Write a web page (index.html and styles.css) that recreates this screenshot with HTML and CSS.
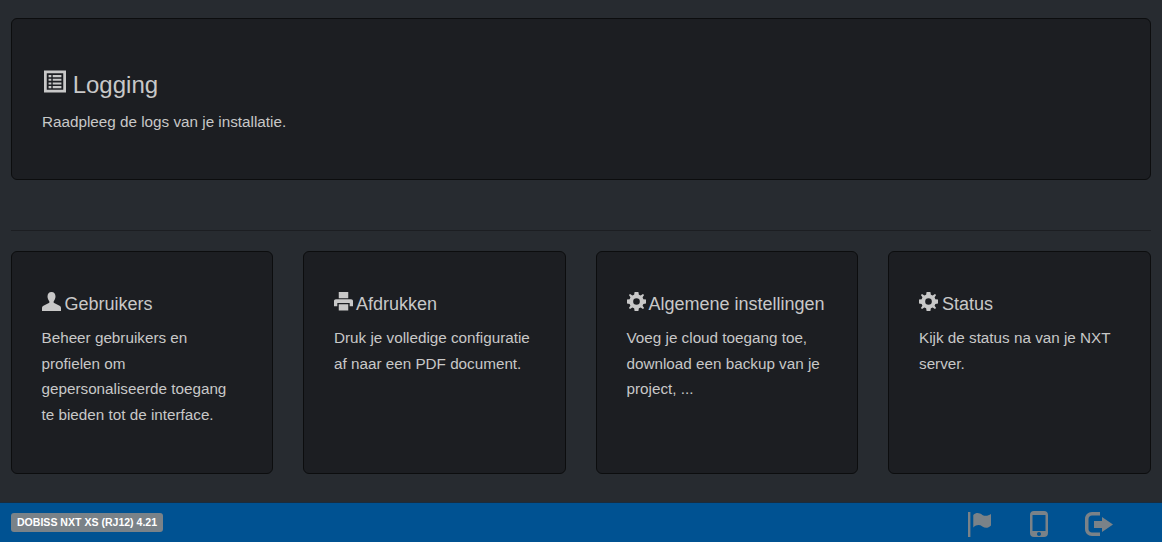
FILE: index.html
```html
<!DOCTYPE html>
<html lang="nl">
<head>
<meta charset="utf-8">
<title>Dobiss NXT</title>
<link rel="stylesheet" href="styles.css">
</head>
<body>
<main class="content">
  <section class="well well-wide">
    <h2 class="title-lg">
      <svg class="ico-lg" viewBox="0 0 24 24"><path fill-rule="evenodd" d="M0 0H24V24H0ZM3 3V21H21V3ZM5 5H8V7.300H5ZM9.500 5H19V7.300H9.500ZM5 9H8V11.300H5ZM9.500 9H19V11.300H9.500ZM5 13H8V15.300H5ZM9.500 13H19V15.300H9.500ZM5 17H8V19.300H5ZM9.500 17H19V19.300H9.500Z"/></svg>
      Logging</h2>
    <p class="text">Raadpleeg de logs van je installatie.</p>
  </section>
  <hr class="divider">
  <div class="cards">
    <section class="well card">
      <h3 class="title">
        <svg class="ico" viewBox="0 0 20 20"><path d="M10 0C7.300 0 5.800 2 5.800 4.800c0 2 .8 3.700 1.900 4.900v1.500L1.500 14.500C.4 15.100 0 16 0 17v3h20v-3c0-1-.4-1.900-1.500-2.500l-6.200-3.300V9.700c1.100-1.200 1.900-2.900 1.900-4.900C14.200 2 12.700 0 10 0Z"/></svg>
        Gebruikers</h3>
      <p class="text">Beheer gebruikers en profielen om gepersonaliseerde toegang te bieden tot de interface.</p>
    </section>
    <section class="well card">
      <h3 class="title">
        <svg class="ico" viewBox="0 0 20 20"><path fill-rule="evenodd" d="M5 0H15V6.500H5ZM2 7.500H18C19.200 7.500 20 8.300 20 9.500V15H16.500V11.500H3.500V15H0V9.500C0 8.300.8 7.500 2 7.500ZM5 13H15V19.500H5Z"/></svg>
        Afdrukken</h3>
      <p class="text">Druk je volledige configuratie af naar een PDF document.</p>
    </section>
    <section class="well card">
      <h3 class="title">
        <svg class="ico" viewBox="0 0 20 20"><use href="#gear"/></svg>
        Algemene instellingen</h3>
      <p class="text">Voeg je cloud toegang toe, download een backup van je project, ...</p>
    </section>
    <section class="well card">
      <h3 class="title">
        <svg class="ico" viewBox="0 0 20 20"><use href="#gear"/></svg>
        Status</h3>
      <p class="text">Kijk de status na van je NXT server.</p>
    </section>
  </div>
</main>
<footer class="bar">
  <span class="badge">DOBISS NXT XS (RJ12) 4.21</span>
  <nav class="bar-icons">
    <svg class="bar-ico flag" viewBox="0 0 24 26"><path d="M0 0H2.500V26H0ZM5.500 3C9 0 12 1 15 3C18 4.500 21 4 24 2V14C21 17 18 17 15 15C12 13 9 13 5.500 16Z"/></svg>
    <svg class="bar-ico phone" viewBox="0 0 18 26"><path fill-rule="evenodd" d="M4 0H14C16.500 0 18 1.500 18 4V22C18 24.500 16.500 26 14 26H4C1.500 26 0 24.500 0 22V4C0 1.500 1.500 0 4 0ZM2.500 4V20H15.500V4ZM9 21C7.800 21 7 21.800 7 23S7.800 25 9 25 11 24.200 11 23 10.200 21 9 21Z"/></svg>
    <svg class="bar-ico exit" viewBox="0 0 28 24"><path d="M7 0H15V3.500H7C5 3.500 3.500 5 3.500 7V17C3.500 19 5 20.500 7 20.500H15V24H7C3 24 0 21 0 17V7C0 3 3 0 7 0ZM17 5L28 12.500 17 20V16H9V9H17Z"/></svg>
  </nav>
</footer>
<svg class="defs" aria-hidden="true"><defs>
  <path id="gear" fill-rule="evenodd" d="M8 0H12L12.500 2.800 14.400 3.600 16.800 2 18 3.200 16.400 5.600 17.200 7.500 20 8V12L17.200 12.500 16.400 14.400 18 16.800 16.800 18 14.400 16.400 12.500 17.200 12 20H8L7.500 17.200 5.600 16.400 3.200 18 2 16.800 3.600 14.400 2.800 12.500 0 12V8L2.800 7.500 3.600 5.600 2 3.200 3.200 2 5.600 3.600 7.500 2.800ZM10 6.500A3.500 3.500 0 1 0 10 13.500 3.500 3.500 0 1 0 10 6.500Z"/>
</defs></svg>
</body>
</html>
```

FILE: styles.css
```css
* { box-sizing: border-box; }
html, body { height: 100%; }
body {
  margin: 0;
  background: #272b30;
  color: #c8c8c8;
  font-family: "Liberation Sans", Arial, sans-serif;
  font-size: 15.25px;
  line-height: 25.6px;
  display: flex;
  flex-direction: column;
  overflow: hidden;
}
.content { flex: 1; padding: 18px 11px 0; }
.well {
  background: #1c1e22;
  border: 1px solid #0c0d0e;
  border-radius: 6px;
}
.well-wide { height: 162px; padding: 48px 30px 0; }
.title-lg {
  margin: 0 0 6px;
  font-size: 24px;
  font-weight: 400;
  line-height: 36px;
  color: #c8c8c8;
}
.ico-lg { width: 22px; height: 23px; fill: #c8c8c8; vertical-align: 0; margin-left: 2px; }
.text { margin: 0; }
.divider { border: 0; border-top: 1px solid #1c1e22; margin: 50px 0 20px; }
.cards { display: grid; grid-template-columns: repeat(4, 1fr); gap: 30px; margin: 0 .5px 0 -.5px; }
.card { height: 223px; padding: 37px 30px 0; }
.title {
  margin: 0 0 6px;
  font-size: 18px;
  font-weight: 400;
  line-height: 30px;
  color: #c8c8c8;
}
.ico { width: 19px; height: 19px; fill: #c8c8c8; vertical-align: -1px; margin-right: -1px; }
.bar {
  flex: none;
  height: 40px;
  background: #005292;
  border-top: 1px solid #1a2c3e;
  display: flex;
  align-items: center;
  padding-left: 11px;
}
.badge {
  background: #7a8288;
  color: #fff;
  font-size: 10.55px;
  font-weight: 700;
  line-height: 19px;
  height: 19px;
  padding: 0 6px;
  border-radius: 3px;
}
.bar-icons { margin: 3px 0 0 auto; display: flex; align-items: center; padding-right: 49px; }
.bar-ico { fill: #7a8288; display: block; }
.flag { width: 23px; height: 25px; margin-right: 39px; }
.phone { width: 18px; height: 26px; margin-right: 37px; }
.exit { width: 28px; height: 24px; }
.defs { position: absolute; width: 0; height: 0; }
```
